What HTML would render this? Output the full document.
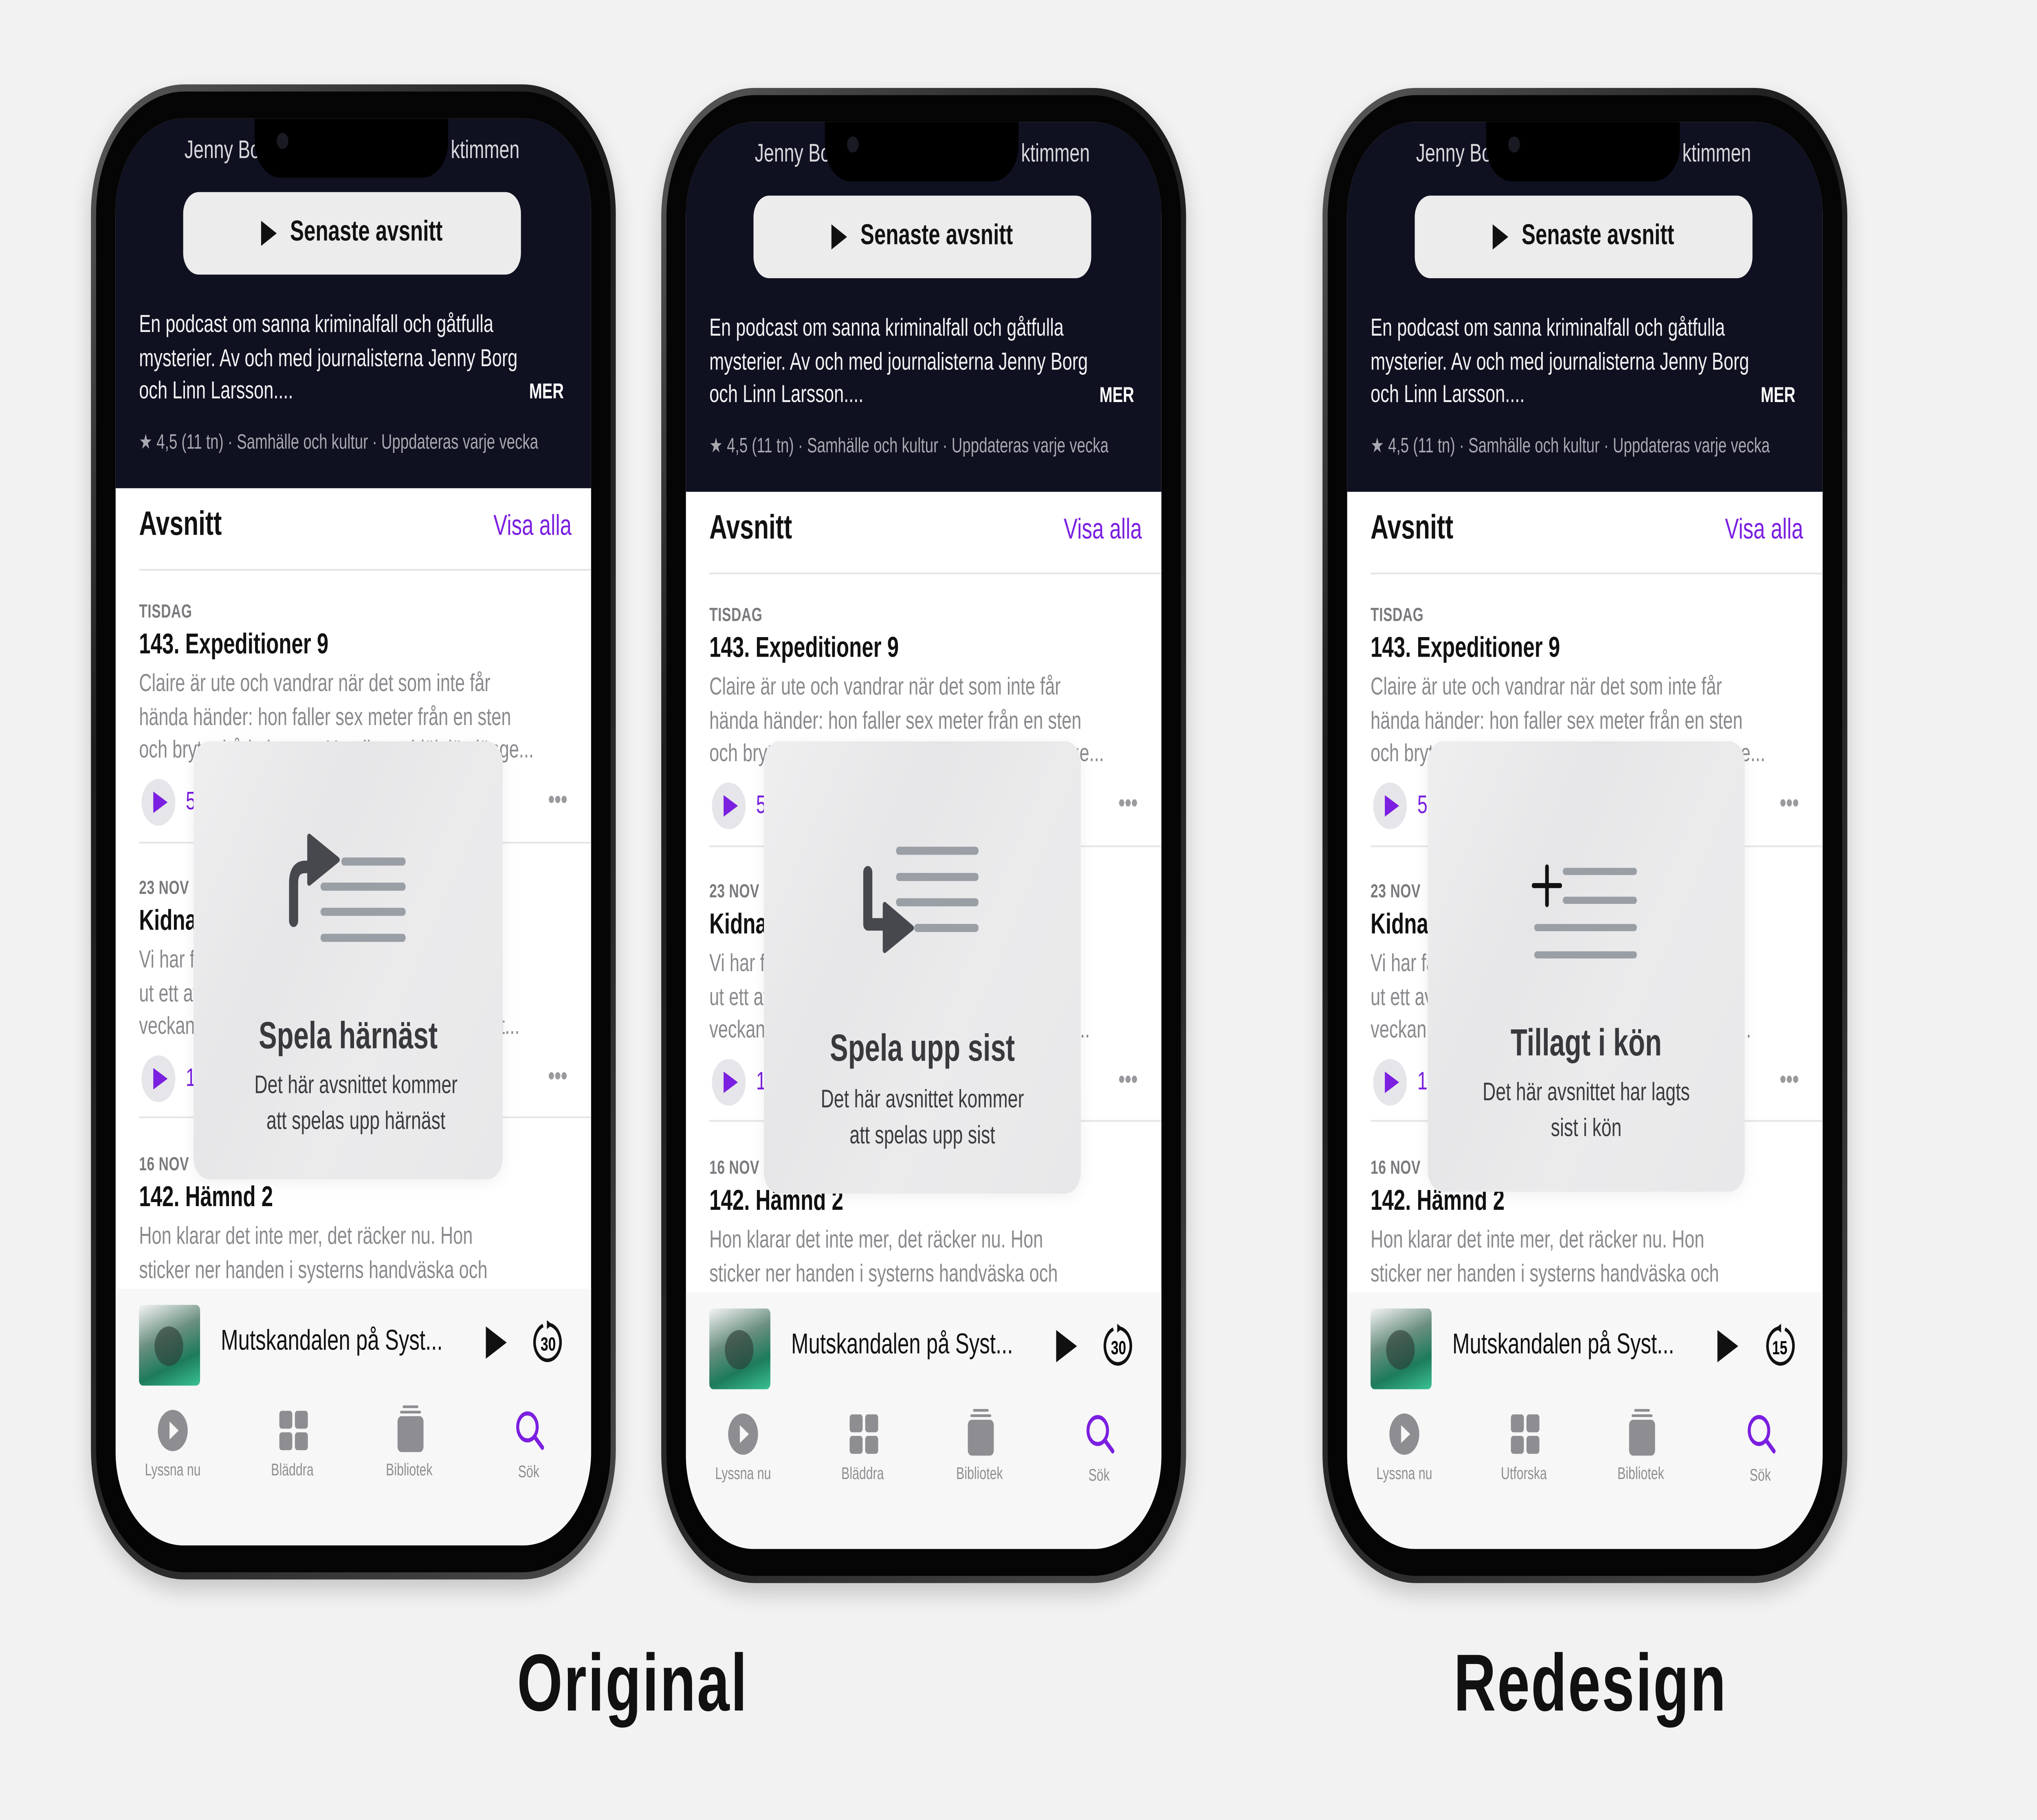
<!DOCTYPE html>
<html><head><meta charset="utf-8">
<style>
*{margin:0;padding:0;box-sizing:border-box}
html,body{width:100%;height:100%;overflow:hidden;background:#f2f2f2}
#w{position:absolute;left:0;top:0;width:1568px;height:1014px;transform:scale(3.183,4.406);transform-origin:0 0;font-family:"Liberation Sans",sans-serif;background:#f2f2f2}
.ph{position:absolute;width:404px;height:833px;border-radius:72px;background:linear-gradient(135deg,#5a5a5a,#1e1e1e 30%,#2a2a2a 70%,#4a4a4a);box-shadow:0 6px 14px rgba(0,0,0,.18)}
.ph::before{content:"";position:absolute;left:4px;top:4px;right:4px;bottom:4px;border-radius:68px;background:#050505}
.sc{position:absolute;left:19px;top:19px;width:366px;height:795px;border-radius:52px;overflow:hidden;background:#fff}
.a{position:absolute;white-space:nowrap}
.hdr{position:absolute;left:0;top:0;width:366px;height:206px;background:#0f1020}
.notch{position:absolute;left:107px;top:0;width:149px;height:33px;background:#000;border-radius:0 0 20px 20px}
.btn{position:absolute;left:52px;top:41px;width:260px;height:46px;border-radius:12px;background:#ececec;font-size:16px;font-weight:bold;color:#111;display:flex;align-items:center;justify-content:center}
.btn i{display:inline-block;width:0;height:0;border-left:12px solid #111;border-top:7.5px solid transparent;border-bottom:7.5px solid transparent;margin-right:10px}
.desc{position:absolute;left:18px;top:106px;font-size:13.6px;line-height:18.5px;color:#f2f2f4;white-space:nowrap}
.t11{font-size:10.5px;color:#7a7a7e;font-weight:bold;letter-spacing:.2px}
.tt{font-size:16px;font-weight:bold;color:#111}
.dl{font-size:13.6px;line-height:18.5px;color:#8a8a8e}
.hr{position:absolute;left:18px;right:0;height:1px;background:#e6e6e8}
.pc{position:absolute;width:26px;height:26px;border-radius:13px;background:#e6e6ea}
.pc::after{content:"";position:absolute;left:9px;top:6.5px;border-left:11px solid #7b1fe0;border-top:6.5px solid transparent;border-bottom:6.5px solid transparent}
.pur{color:#7b1fe0}
.dots{font-size:14px;color:#9a9a9e;font-weight:bold}
.bar{position:absolute;left:0;top:652px;width:366px;height:143px;background:#f7f7f7}
.art{position:absolute;left:18px;top:661px;width:47px;height:45px;border-radius:3px;background:linear-gradient(160deg,#f4f4f4 0%,#6a8f80 40%,#1d7b5c 70%,#3ac194 100%)}
.art::before{content:"";position:absolute;left:12px;top:12px;width:22px;height:22px;border-radius:50%;background:#2a3a33;opacity:.6}
.tab{position:absolute;top:748px;width:80px;text-align:center;font-size:9.5px;color:#8e8e92}
.ov{position:absolute;border-radius:12px;background:linear-gradient(120deg,#efeff0 0%,#e6e6e8 35%,#ebebec 60%,#e8e8ea 100%);box-shadow:0 2px 10px rgba(0,0,0,.06)}
.ovt{position:absolute;left:0;width:100%;text-align:center;font-size:21px;font-weight:bold;color:#38393d}
.ovs{position:absolute;left:0;width:100%;text-align:center;font-size:14px;line-height:20px;color:#3a3b3f}
.cap{position:absolute;top:912px;font-size:45px;font-weight:bold;color:#111;letter-spacing:1px}
</style></head><body><div id="w">

<!-- PHONE 1 -->
<div class="ph" style="left:70px;top:47px"><div class="sc">
<div class="hdr"></div>
<div class="a" style="left:53px;top:9px;font-size:14px;color:#d8d8dc">Jenny Bo</div>
<div class="a" style="left:258px;top:9px;font-size:14px;color:#d8d8dc">ktimmen</div>
<div class="notch"></div>
<div style="position:absolute;left:124px;top:8px;width:9px;height:9px;border-radius:50%;background:#1a1a24"></div>
<div class="btn"><i></i>Senaste avsnitt</div>
<div class="desc">En podcast om sanna kriminalfall och gåtfulla<br>mysterier. Av och med journalisterna Jenny Borg<br>och Linn Larsson....</div>
<div class="a" style="right:21px;top:145px;font-size:12px;font-weight:bold;color:#fff">MER</div>
<div class="a" style="left:18px;top:173px;font-size:11.5px;color:#a8a8b0;width:327px;overflow:hidden">★ 4,5 (11 tn) · Samhälle och kultur · Uppdateras varje vecka</div>
<div class="a" style="left:18px;top:216px;font-size:19px;font-weight:bold;color:#111">Avsnitt</div>
<div class="a pur" style="right:15px;top:219px;font-size:16px">Visa alla</div>
<div class="hr" style="top:251px"></div>
<div class="a t11" style="left:18px;top:269px">TISDAG</div>
<div class="a tt" style="left:18px;top:285px">143. Expeditioner 9</div>
<div class="a dl" style="left:18px;top:306px">Claire är ute och vandrar när det som inte får<br>hända händer: hon faller sex meter från en sten<br>och bryter båda benen. Hon ligger hjälplös länge...</div>
<div class="pc" style="left:20px;top:368px"></div><div class="a pur" style="left:54px;top:372px;font-size:14px">5</div>
<div class="a dots" style="left:333px;top:371px">•••</div>
<div class="hr" style="top:403px"></div>
<div class="a t11" style="left:18px;top:423px">23 NOV</div>
<div class="a tt" style="left:18px;top:439px">Kidnappad</div>
<div class="a dl" style="left:18px;top:460px">Vi har fått ett tips som får oss att vilja lägga<br>ut ett avsnitt om något som hände för en här<br>veckan. Vi tittar på kidnappningen som inte bot...</div>
<div class="pc" style="left:20px;top:522px"></div><div class="a pur" style="left:54px;top:526px;font-size:14px">1</div>
<div class="a dots" style="left:333px;top:525px">•••</div>
<div class="hr" style="top:556px"></div>
<div class="a t11" style="left:18px;top:577px">16 NOV</div>
<div class="a tt" style="left:18px;top:593px">142. Hämnd 2</div>
<div class="a dl" style="left:18px;top:614px">Hon klarar det inte mer, det räcker nu. Hon<br>sticker ner handen i systerns handväska och</div>
<div class="bar"></div><div class="art"></div>
<div class="a" style="left:81px;top:673px;font-size:16px;color:#111">Mutskandalen på Syst...</div>
<div style="position:absolute;left:285px;top:673px;border-left:16px solid #111;border-top:9.5px solid transparent;border-bottom:9.5px solid transparent"></div>
<svg style="position:absolute;left:320px;top:669px" width="26" height="26" viewBox="0 0 26 26"><path d="M9 3.5A10 10 0 1 0 14 3" fill="none" stroke="#111" stroke-width="2"/><path d="M12 0.5l4 2.5-4 2.5z" fill="#111"/><text x="13" y="17.5" font-size="10.5" font-weight="bold" text-anchor="middle" font-family="Liberation Sans">30</text></svg>
<svg style="position:absolute;left:32px;top:719px" width="24" height="24"><circle cx="12" cy="12" r="11.5" fill="#8e8e92"/><path d="M9.5 7l7 5-7 5z" fill="#f7f7f7"/></svg>
<svg style="position:absolute;left:126px;top:720px" width="22" height="22"><rect x="0" y="0" width="10" height="10" rx="2" fill="#8e8e92"/><rect x="12" y="0" width="10" height="10" rx="2" fill="#8e8e92"/><rect x="0" y="12" width="10" height="10" rx="2" fill="#8e8e92"/><rect x="12" y="12" width="10" height="10" rx="2" fill="#8e8e92"/></svg>
<svg style="position:absolute;left:216px;top:717px" width="22" height="27"><rect x="5" y="0" width="12" height="1.5" rx=".7" fill="#8e8e92"/><rect x="3" y="3" width="16" height="1.5" rx=".7" fill="#8e8e92"/><rect x="1" y="6" width="20" height="20" rx="3" fill="#8e8e92"/></svg>
<svg style="position:absolute;left:307px;top:719px" width="24" height="24"><circle cx="10" cy="10" r="7.5" fill="none" stroke="#7b1fe0" stroke-width="2.3"/><path d="M15.5 15.5l6 6" stroke="#7b1fe0" stroke-width="2.6" stroke-linecap="round"/></svg>
<div class="tab" style="left:4px">Lyssna nu</div><div class="tab" style="left:96px">Bläddra</div><div class="tab" style="left:186px">Bibliotek</div><div class="tab pur" style="left:278px;top:749px">Sök</div>
<div class="ov" style="left:60px;top:347px;width:238px;height:244px"></div>
<svg style="position:absolute;left:0;top:0" width="366" height="795"><g stroke="#9a9ea5" stroke-width="4.5" stroke-linecap="round"><path d="M176 414H221M160 428H221M160 442H221M160 456.5H221"/></g><path d="M137 447V426Q137 417 146 417H152" fill="none" stroke="#46484d" stroke-width="7" stroke-linecap="round"/><path d="M149 400L171 413L149 426Z" fill="#46484d" stroke="#46484d" stroke-width="3" stroke-linejoin="round"/></svg>
<div class="ovt" style="left:60px;width:238px;top:500px">Spela härnäst</div>
<div class="ovs" style="left:66px;width:238px;top:528px">Det här avsnittet kommer<br>att spelas upp härnäst</div>
</div></div>

<!-- PHONE 2 -->
<div class="ph" style="left:509px;top:49px"><div class="sc">
<div class="hdr"></div>
<div class="a" style="left:53px;top:9px;font-size:14px;color:#d8d8dc">Jenny Bo</div>
<div class="a" style="left:258px;top:9px;font-size:14px;color:#d8d8dc">ktimmen</div>
<div class="notch"></div>
<div style="position:absolute;left:124px;top:8px;width:9px;height:9px;border-radius:50%;background:#1a1a24"></div>
<div class="btn"><i></i>Senaste avsnitt</div>
<div class="desc">En podcast om sanna kriminalfall och gåtfulla<br>mysterier. Av och med journalisterna Jenny Borg<br>och Linn Larsson....</div>
<div class="a" style="right:21px;top:145px;font-size:12px;font-weight:bold;color:#fff">MER</div>
<div class="a" style="left:18px;top:173px;font-size:11.5px;color:#a8a8b0;width:327px;overflow:hidden">★ 4,5 (11 tn) · Samhälle och kultur · Uppdateras varje vecka</div>
<div class="a" style="left:18px;top:216px;font-size:19px;font-weight:bold;color:#111">Avsnitt</div>
<div class="a pur" style="right:15px;top:219px;font-size:16px">Visa alla</div>
<div class="hr" style="top:251px"></div>
<div class="a t11" style="left:18px;top:269px">TISDAG</div>
<div class="a tt" style="left:18px;top:285px">143. Expeditioner 9</div>
<div class="a dl" style="left:18px;top:306px">Claire är ute och vandrar när det som inte får<br>hända händer: hon faller sex meter från en sten<br>och bryter båda benen. Hon ligger hjälplös länge...</div>
<div class="pc" style="left:20px;top:368px"></div><div class="a pur" style="left:54px;top:372px;font-size:14px">5</div>
<div class="a dots" style="left:333px;top:371px">•••</div>
<div class="hr" style="top:403px"></div>
<div class="a t11" style="left:18px;top:423px">23 NOV</div>
<div class="a tt" style="left:18px;top:439px">Kidnappad</div>
<div class="a dl" style="left:18px;top:460px">Vi har fått ett tips som får oss att vilja lägga<br>ut ett avsnitt om något som hände för en här<br>veckan. Vi tittar på kidnappningen som inte bot...</div>
<div class="pc" style="left:20px;top:522px"></div><div class="a pur" style="left:54px;top:526px;font-size:14px">1</div>
<div class="a dots" style="left:333px;top:525px">•••</div>
<div class="hr" style="top:556px"></div>
<div class="a t11" style="left:18px;top:577px">16 NOV</div>
<div class="a tt" style="left:18px;top:593px">142. Hämnd 2</div>
<div class="a dl" style="left:18px;top:614px">Hon klarar det inte mer, det räcker nu. Hon<br>sticker ner handen i systerns handväska och</div>
<div class="bar"></div><div class="art"></div>
<div class="a" style="left:81px;top:673px;font-size:16px;color:#111">Mutskandalen på Syst...</div>
<div style="position:absolute;left:285px;top:673px;border-left:16px solid #111;border-top:9.5px solid transparent;border-bottom:9.5px solid transparent"></div>
<svg style="position:absolute;left:320px;top:669px" width="26" height="26" viewBox="0 0 26 26"><path d="M9 3.5A10 10 0 1 0 14 3" fill="none" stroke="#111" stroke-width="2"/><path d="M12 0.5l4 2.5-4 2.5z" fill="#111"/><text x="13" y="17.5" font-size="10.5" font-weight="bold" text-anchor="middle" font-family="Liberation Sans">30</text></svg>
<svg style="position:absolute;left:32px;top:719px" width="24" height="24"><circle cx="12" cy="12" r="11.5" fill="#8e8e92"/><path d="M9.5 7l7 5-7 5z" fill="#f7f7f7"/></svg>
<svg style="position:absolute;left:126px;top:720px" width="22" height="22"><rect x="0" y="0" width="10" height="10" rx="2" fill="#8e8e92"/><rect x="12" y="0" width="10" height="10" rx="2" fill="#8e8e92"/><rect x="0" y="12" width="10" height="10" rx="2" fill="#8e8e92"/><rect x="12" y="12" width="10" height="10" rx="2" fill="#8e8e92"/></svg>
<svg style="position:absolute;left:216px;top:717px" width="22" height="27"><rect x="5" y="0" width="12" height="1.5" rx=".7" fill="#8e8e92"/><rect x="3" y="3" width="16" height="1.5" rx=".7" fill="#8e8e92"/><rect x="1" y="6" width="20" height="20" rx="3" fill="#8e8e92"/></svg>
<svg style="position:absolute;left:307px;top:719px" width="24" height="24"><circle cx="10" cy="10" r="7.5" fill="none" stroke="#7b1fe0" stroke-width="2.3"/><path d="M15.5 15.5l6 6" stroke="#7b1fe0" stroke-width="2.6" stroke-linecap="round"/></svg>
<div class="tab" style="left:4px">Lyssna nu</div><div class="tab" style="left:96px">Bläddra</div><div class="tab" style="left:186px">Bibliotek</div><div class="tab pur" style="left:278px;top:749px">Sök</div>
<div class="ov" style="left:60px;top:345px;width:244px;height:252px"></div>
<svg style="position:absolute;left:0;top:0" width="366" height="795"><g stroke="#9a9ea5" stroke-width="4.5" stroke-linecap="round"><path d="M164 406H223M164 420.6H223M164 434.7H223M178 449H223"/></g><path d="M140 418V447H155" fill="none" stroke="#46484d" stroke-width="7" stroke-linecap="round" stroke-linejoin="round"/><path d="M153 436L174 449L153 461.5Z" fill="#46484d" stroke="#46484d" stroke-width="3" stroke-linejoin="round"/></svg>
<div class="ovt" style="left:60px;width:244px;top:505px">Spela upp sist</div>
<div class="ovs" style="left:60px;width:244px;top:534px">Det här avsnittet kommer<br>att spelas upp sist</div>
</div></div>

<!-- PHONE 3 -->
<div class="ph" style="left:1018px;top:49px"><div class="sc">
<div class="hdr"></div>
<div class="a" style="left:53px;top:9px;font-size:14px;color:#d8d8dc">Jenny Bo</div>
<div class="a" style="left:258px;top:9px;font-size:14px;color:#d8d8dc">ktimmen</div>
<div class="notch"></div>
<div style="position:absolute;left:124px;top:8px;width:9px;height:9px;border-radius:50%;background:#1a1a24"></div>
<div class="btn"><i></i>Senaste avsnitt</div>
<div class="desc">En podcast om sanna kriminalfall och gåtfulla<br>mysterier. Av och med journalisterna Jenny Borg<br>och Linn Larsson....</div>
<div class="a" style="right:21px;top:145px;font-size:12px;font-weight:bold;color:#fff">MER</div>
<div class="a" style="left:18px;top:173px;font-size:11.5px;color:#a8a8b0;width:327px;overflow:hidden">★ 4,5 (11 tn) · Samhälle och kultur · Uppdateras varje vecka</div>
<div class="a" style="left:18px;top:216px;font-size:19px;font-weight:bold;color:#111">Avsnitt</div>
<div class="a pur" style="right:15px;top:219px;font-size:16px">Visa alla</div>
<div class="hr" style="top:251px"></div>
<div class="a t11" style="left:18px;top:269px">TISDAG</div>
<div class="a tt" style="left:18px;top:285px">143. Expeditioner 9</div>
<div class="a dl" style="left:18px;top:306px">Claire är ute och vandrar när det som inte får<br>hända händer: hon faller sex meter från en sten<br>och bryter båda benen. Hon ligger hjälplös länge...</div>
<div class="pc" style="left:20px;top:368px"></div><div class="a pur" style="left:54px;top:372px;font-size:14px">5</div>
<div class="a dots" style="left:333px;top:371px">•••</div>
<div class="hr" style="top:403px"></div>
<div class="a t11" style="left:18px;top:423px">23 NOV</div>
<div class="a tt" style="left:18px;top:439px">Kidnappad</div>
<div class="a dl" style="left:18px;top:460px">Vi har fått ett tips som får oss att vilja lägga<br>ut ett avsnitt om något som hände för en här<br>veckan. Vi tittar på kidnappningen som inte bot...</div>
<div class="pc" style="left:20px;top:522px"></div><div class="a pur" style="left:54px;top:526px;font-size:14px">1</div>
<div class="a dots" style="left:333px;top:525px">•••</div>
<div class="hr" style="top:556px"></div>
<div class="a t11" style="left:18px;top:577px">16 NOV</div>
<div class="a tt" style="left:18px;top:593px">142. Hämnd 2</div>
<div class="a dl" style="left:18px;top:614px">Hon klarar det inte mer, det räcker nu. Hon<br>sticker ner handen i systerns handväska och</div>
<div class="bar"></div><div class="art"></div>
<div class="a" style="left:81px;top:673px;font-size:16px;color:#111">Mutskandalen på Syst...</div>
<div style="position:absolute;left:285px;top:673px;border-left:16px solid #111;border-top:9.5px solid transparent;border-bottom:9.5px solid transparent"></div>
<svg style="position:absolute;left:320px;top:669px" width="26" height="26" viewBox="0 0 26 26"><path d="M17 3.5A10 10 0 1 1 12 3" fill="none" stroke="#111" stroke-width="2"/><path d="M14 0.5l-4 2.5 4 2.5z" fill="#111"/><text x="13" y="17.5" font-size="10.5" font-weight="bold" text-anchor="middle" font-family="Liberation Sans">15</text></svg>
<svg style="position:absolute;left:32px;top:719px" width="24" height="24"><circle cx="12" cy="12" r="11.5" fill="#8e8e92"/><path d="M9.5 7l7 5-7 5z" fill="#f7f7f7"/></svg>
<svg style="position:absolute;left:126px;top:720px" width="22" height="22"><rect x="0" y="0" width="10" height="10" rx="2" fill="#8e8e92"/><rect x="12" y="0" width="10" height="10" rx="2" fill="#8e8e92"/><rect x="0" y="12" width="10" height="10" rx="2" fill="#8e8e92"/><rect x="12" y="12" width="10" height="10" rx="2" fill="#8e8e92"/></svg>
<svg style="position:absolute;left:216px;top:717px" width="22" height="27"><rect x="5" y="0" width="12" height="1.5" rx=".7" fill="#8e8e92"/><rect x="3" y="3" width="16" height="1.5" rx=".7" fill="#8e8e92"/><rect x="1" y="6" width="20" height="20" rx="3" fill="#8e8e92"/></svg>
<svg style="position:absolute;left:307px;top:719px" width="24" height="24"><circle cx="10" cy="10" r="7.5" fill="none" stroke="#7b1fe0" stroke-width="2.3"/><path d="M15.5 15.5l6 6" stroke="#7b1fe0" stroke-width="2.6" stroke-linecap="round"/></svg>
<div class="tab" style="left:4px">Lyssna nu</div><div class="tab" style="left:96px">Utforska</div><div class="tab" style="left:186px">Bibliotek</div><div class="tab pur" style="left:278px;top:749px">Sök</div>
<div class="ov" style="left:62px;top:345px;width:244px;height:251px"></div>
<svg style="position:absolute;left:0;top:0" width="366" height="795"><g stroke="#9a9ea5" stroke-width="4" stroke-linecap="round"><path d="M168 417.5H221M168 433.6H221M146 448.8H221M146 464H221"/></g><path d="M153.8 415V436M143.5 425.4H164" stroke="#111" stroke-width="2.8" stroke-linecap="round"/></svg>
<div class="ovt" style="left:62px;width:244px;top:502px">Tillagt i kön</div>
<div class="ovs" style="left:62px;width:244px;top:530px">Det här avsnittet har lagts<br>sist i kön</div>
</div></div>

<div class="cap" style="left:398px">Original</div>
<div class="cap" style="left:1119px">Redesign</div>
</div>
<script>
(function(){var w=document.getElementById('w');function f(){var sx=window.innerWidth/1568,sy=window.innerHeight/1014;if(sx>0&&sy>0)w.style.transform='scale('+sx+','+sy+')';}f();window.addEventListener('resize',f);})();
</script>
</body></html>
